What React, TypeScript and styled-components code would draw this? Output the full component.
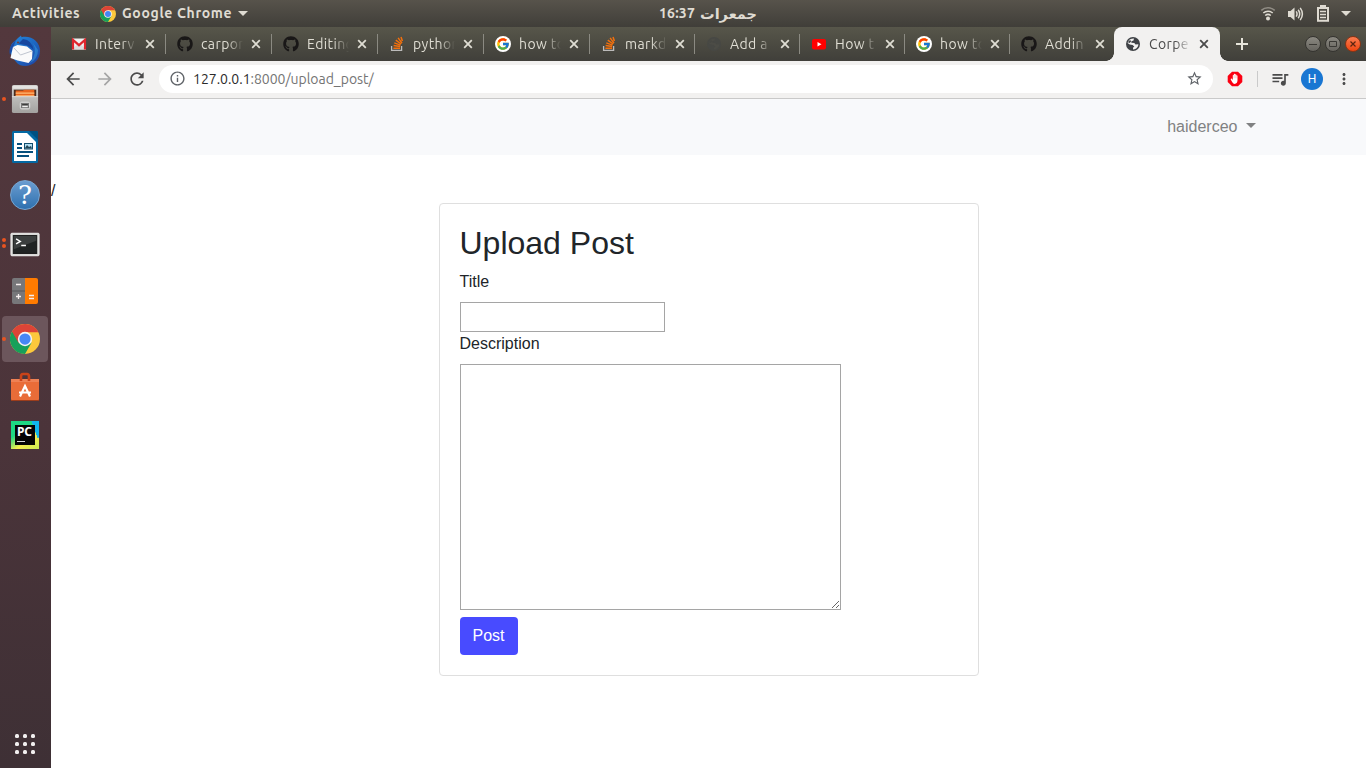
import React from "react";
import styled, { createGlobalStyle, css } from "styled-components";
import { FaGithub } from "react-icons/fa";
import { FcGoogle } from "react-icons/fc";
import {
  MdArrowBack,
  MdArrowForward,
  MdRefresh,
  MdInfoOutline,
  MdStarBorder,
  MdQueueMusic,
  MdMoreVert,
} from "react-icons/md";

const uiFont = `Ubuntu, "Noto Sans", "DejaVu Sans", sans-serif`;

const GlobalStyle = createGlobalStyle`
  *, *::before, *::after { box-sizing: border-box; }
  body { margin: 0; overflow: hidden; background: #fff; }
  svg { display: block; flex: none; }
`;

const Desktop = styled.div`
  display: flex;
  flex-direction: column;
  width: 1366px;
  height: 768px;
  font-family: ${uiFont};
`;

const TopBar = styled.header`
  display: grid;
  grid-template-columns: 659px auto 1fr;
  align-items: center;
  height: 27px;
  background: linear-gradient(#57534b, #403e39);
  color: #dfdbd2;
  font-size: 14px;
  font-weight: 700;
  line-height: 27px;
`;

const TopGroup = styled.div`
  display: flex;
  align-items: center;
`;

const Activities = styled.span`
  width: 88px;
  padding-left: 12px;
  letter-spacing: 0.6px;
`;

const AppMenu = styled.div`
  display: flex;
  align-items: center;
  gap: 6px;
  padding-left: 12px;
  letter-spacing: 0.65px;
`;

const Clock = styled.div`
  display: flex;
  align-items: center;
  justify-content: space-between;
  width: 98px;
  height: 27px;
  direction: rtl;
  font-family: Ubuntu, "DejaVu Sans", sans-serif;
  font-size: 14.5px;
  white-space: nowrap;
`;

const TimeText = styled.span`
  font-family: ${uiFont};
  font-size: 14px;
  letter-spacing: 0.2px;
`;

const Indicators = styled.div`
  display: flex;
  justify-content: flex-end;
  align-items: center;
  gap: 11.5px;
  padding-right: 15px;
`;

const Caret = styled.span`
  width: 0;
  height: 0;
  border: 5px solid transparent;
  border-top-color: currentColor;
  border-bottom: 0;
`;

const Workspace = styled.div`
  display: flex;
  flex: 1;
  min-height: 0;
`;

const Launcher = styled.nav`
  display: flex;
  flex-direction: column;
  gap: 2px;
  width: 51px;
  padding: 1px 2px 0;
  background: linear-gradient(#53383d, #4b343a 55%, #3e3035);
`;

const LauncherItem = styled.div<{ $active?: boolean; $drop?: boolean }>`
  position: relative;
  display: flex;
  align-items: center;
  justify-content: center;
  width: 46px;
  height: 46px;
  padding-top: ${(p) => (p.$drop ? 2 : 0)}px;
  border-radius: 4px;
  background: ${(p) => (p.$active ? "#6c565c" : "transparent")};
`;

const RunningDots = styled.div`
  position: absolute;
  left: 0;
  top: 0;
  bottom: 0;
  display: flex;
  flex-direction: column;
  justify-content: center;
  gap: 2px;
`;

const RunningDot = styled.span`
  width: 4px;
  height: 4px;
  border-radius: 50%;
  background: #e95420;
`;

const AppsButton = styled.div`
  display: grid;
  grid-template-columns: repeat(3, 4px);
  gap: 4px;
  justify-content: center;
  margin-top: auto;
  padding: 0 1px 14px 0;
`;

const AppsDot = styled.span`
  width: 4px;
  height: 4px;
  border-radius: 1.5px;
  background: #f2f0f0;
`;

const Browser = styled.main`
  display: flex;
  flex-direction: column;
  flex: 1;
  min-width: 0;
  background: #fff;
`;

const TabStrip = styled.div`
  display: flex;
  height: 34px;
  padding-left: 9px;
  background: linear-gradient(#57564a, #403f3a);
`;

const flare = css`
  content: "";
  position: absolute;
  bottom: 0;
  width: 8px;
  height: 8px;
`;

const TabBox = styled.div<{ $width: number; $active?: boolean; $line?: boolean }>`
  position: relative;
  display: flex;
  align-items: center;
  flex: none;
  width: ${(p) => p.$width}px;
  height: 34px;
  padding-left: 11px;
  color: ${(p) => (p.$active ? "#4a4a4a" : "#dfddd3")};
  ${(p) =>
    p.$active &&
    css`
      background: #f2f1f0;
      border-radius: 8px 8px 0 0;
      &::before {
        ${flare}
        left: -8px;
        background: radial-gradient(circle at 0 0, transparent 7.5px, #f2f1f0 8px);
      }
      &::after {
        ${flare}
        right: -8px;
        background: radial-gradient(circle at 100% 0, transparent 7.5px, #f2f1f0 8px);
      }
    `}
  ${(p) =>
    p.$line &&
    css`
      &::after {
        content: "";
        position: absolute;
        right: 0;
        top: 7px;
        width: 1px;
        height: 20px;
        background: #8b8a82;
      }
    `}
`;

const Favicon = styled.span`
  display: flex;
  align-items: center;
  justify-content: center;
  width: 16px;
  height: 16px;
`;

const GoogleDisc = styled.span`
  display: flex;
  align-items: center;
  justify-content: center;
  width: 16px;
  height: 16px;
  border-radius: 50%;
  background: #fff;
`;

const TabTitle = styled.span`
  width: 42px;
  margin: 0 8px;
  font-size: 14px;
  line-height: 20px;
  letter-spacing: 0.4px;
  white-space: nowrap;
  mask-image: linear-gradient(to right, #000 62%, transparent);
`;

const NewTab = styled.div`
  display: flex;
  align-items: center;
  padding-left: 16px;
`;

const WindowControls = styled.div`
  display: flex;
  align-items: center;
  gap: 4px;
  margin-left: auto;
  padding-right: 5px;
`;

const WindowButton = styled.span<{ $close?: boolean }>`
  display: flex;
  align-items: center;
  justify-content: center;
  width: 16px;
  height: 16px;
  border: 1px solid ${(p) => (p.$close ? "#8a3414" : "#353430")};
  border-radius: 50%;
  background: ${(p) =>
    p.$close ? "linear-gradient(#fb7c50, #ed4510)" : "linear-gradient(#8b8981, #66645e)"};
`;

const Toolbar = styled.div`
  display: flex;
  align-items: center;
  height: 38px;
  padding: 0 10px 2px 12px;
  border-bottom: 1px solid #c9c9c9;
  background: #f2f1f0;
  color: #4b4b4b;
`;

const NavButtons = styled.div`
  display: flex;
  flex: none;
  gap: 12px;
  width: 96px;
`;

const AddressBar = styled.div`
  display: flex;
  flex: none;
  align-items: center;
  width: 1054px;
  height: 28px;
  padding: 0 10px 0 9.5px;
  border-radius: 14px;
  background: #fff;
  color: #5f6368;
`;

const Address = styled.span`
  flex: 1;
  margin-left: 7.5px;
  color: #747474;
  font-size: 14px;
  letter-spacing: -0.02px;
`;

const Host = styled.span`
  color: #2b2b2b;
`;

const ToolbarActions = styled.div`
  display: flex;
  align-items: center;
  margin-left: 14px;
`;

const ToolbarDivider = styled.span`
  width: 1px;
  height: 16px;
  margin: 0 12px 0 14px;
  background: #cacaca;
`;

const Avatar = styled.span`
  display: flex;
  align-items: center;
  justify-content: center;
  width: 22px;
  height: 22px;
  margin: 0 12px 0 11px;
  border-radius: 50%;
  background: #1976d2;
  color: #fff;
  font: 12px/22px Roboto, sans-serif;
`;

const Page = styled.div`
  flex: 1;
  background: #fff;
  color: #212529;
  font: 16px/24px "Liberation Sans", Arial, sans-serif;
`;

const Navbar = styled.div`
  display: flex;
  align-items: center;
  justify-content: flex-end;
  gap: 8.5px;
  height: 56px;
  padding-right: 110px;
  background: #f8f9fb;
  color: #808182;
`;

const MenuCaret = styled(Caret)`
  margin-bottom: 4px;
`;

const PathLine = styled.div`
  height: 48px;
  padding-top: 24px;
`;

const Card = styled.form`
  width: 540px;
  height: 473px;
  margin-left: 387.5px;
  padding: 20px;
  border: 1px solid #dfdfdf;
  border-radius: 4px;
`;

const Heading = styled.h2`
  margin: 0 0 8px;
  font-size: 32px;
  font-weight: 400;
  line-height: 38.4px;
`;

const Label = styled.label`
  display: block;
  margin-bottom: 8px;
`;

const TitleInput = styled.input`
  display: block;
  width: 205px;
  height: 30px;
  border: 1px solid #a5a5a5;
  border-radius: 0;
  background: #fff;
`;

const DescriptionInput = styled.textarea`
  display: block;
  width: 381px;
  height: 246px;
  border: 1px solid #a5a5a5;
  border-radius: 0;
  background: #fff;
`;

const PostButton = styled.button`
  display: block;
  width: 58px;
  height: 38px;
  margin-top: 7px;
  padding: 0;
  border: 0;
  border-radius: 4px;
  background: #484bff;
  color: #fff;
  font: 16px/24px "Liberation Sans", Arial, sans-serif;
`;

const ChromeLogo = ({ size }: { size: number }) => (
  <svg width={size} height={size} viewBox="0 0 48 48">
    <circle cx="24" cy="24" r="24" fill="#fcc93c" />
    <path d="M24 24 3.2 12A24 24 0 0 0 24 48L34.4 30Z" fill="#17a05a" />
    <path d="M24 24V13H45.3A24 24 0 0 0 3.2 12L13.6 30Z" fill="#dc4437" />
    <circle cx="24" cy="24" r="11.5" fill="#f4f4f4" />
    <circle cx="24" cy="24" r="9" fill="#4587f4" />
  </svg>
);

const GmailIcon = () => (
  <svg width="16" height="16" viewBox="0 0 16 16">
    <path d="M1 2.5h14v11H1z" fill="#f1f1f1" />
    <path d="m1 13.500 5-5 2 1.500L10 8.500l5 5z" fill="#ddd" />
    <path d="M2 13.500V4l6 5.200L14 4v9.500" fill="none" stroke="#e0262d" strokeWidth="2.2" />
  </svg>
);

const GlobeIcon = ({ color, land }: { color: string; land: string }) => (
  <svg width="16" height="16" viewBox="0 0 16 16">
    <circle cx="8" cy="8" r="7" fill={color} />
    <path
      d="M9 2.600 8.500 4.500 6.500 5.200 6.300 6.800 9.300 7l1.200 1.600 2.900-.3Q13.200 12 9.600 13.200L8 13.400v-1.600l1.300-1.400L7.600 8.900 4.700 8.600 2.600 6.900Q3.600 2.600 9 2.600z"
      fill={land}
    />
    <path d="m3.600 4.800 1.800-.6.8 1-1.500 1.700-1.500-.3z" fill={color} />
  </svg>
);

const StackIcon = () => (
  <svg width="16" height="16" viewBox="0 0 16 16" fill="none" strokeWidth="1.3">
    <path d="M2.6 10v4.4h10V10" stroke="#bcbbbb" />
    <path
      d="M4.4 12.2h6.7M4.6 9.6l6.6 1M5.3 6.9l6.2 2.2M6.8 4.1l5.3 3.9M9.1 1.900l3.900 5.200M12 1l1.400 4"
      stroke="#f4700c"
      strokeWidth="1.5"
    />
  </svg>
);

const YoutubeIcon = () => (
  <svg width="16" height="16" viewBox="0 0 16 16">
    <rect x="1" y="3" width="14" height="10.5" rx="2" fill="#f00" />
    <path d="m6.500 6 4 2.200-4 2.300z" fill="#fff" />
  </svg>
);

const CloseIcon = () => (
  <svg width="10" height="10" viewBox="0 0 10 10" stroke="currentColor" strokeWidth="1.8">
    <path d="m1.200 1.200 7.600 7.600M8.800 1.200 1.200 8.800" />
  </svg>
);

const WifiIcon = () => (
  <svg width="16" height="16" viewBox="0 0 16 16" fill="none" stroke="#dfdbd2" strokeWidth="1.6">
    <path d="M1.300 4.400a10 10 0 0 1 13.400 0" opacity=".45" />
    <path d="M3.300 7a7 7 0 0 1 9.400 0M5.200 9.500a4.400 4.400 0 0 1 5.600 0" />
    <circle cx="8" cy="12.500" r="2" fill="#dfdbd2" stroke="none" />
  </svg>
);

const VolumeIcon = () => (
  <svg width="17" height="16" viewBox="0 0 17 16" fill="none" stroke="#dfdbd2" strokeWidth="1.5">
    <path d="M1 5h2.500L7.500 1.500v13L3.500 11H1z" fill="#dfdbd2" stroke="none" />
    <path d="M9.200 5.400q1.700 2.600 0 5.200M11.200 3.700q3 4.300 0 8.600M13.200 1.900q4.400 6.100 0 12.200" />
  </svg>
);

const BatteryIcon = () => (
  <svg width="14" height="17" viewBox="0 0 14 17" fill="none" stroke="#dfdbd2">
    <path d="M2 3h10v12.800H2z" strokeWidth="2" />
    <path d="M4 1.200h6" strokeWidth="2.4" />
    <path d="M4 6.500h6M4 9.500h6M4 12.500h6" strokeWidth="1.3" />
  </svg>
);

const AdBlockIcon = () => (
  <svg width="16" height="16" viewBox="0 0 16 16">
    <path d="M5 .7h6L15.300 5v6L11 15.300H5L.7 11V5z" fill="#fb0012" />
    <path
      d="M4.700 7.600 5.800 9V4.200q.7-.8 1.100 0V3.100q.7-.7 1.200 0v.3q.8-.6 1.200.2v.8q.9-.5 1.200.3v4.900q-.3 3.300-2.800 3.300-1.500 0-2.400-1.600L3.700 8.400q0-.8 1-.8z"
      fill="#fff"
    />
    <path d="M6.900 4v3.200M8.100 3.600v3.600M9.300 4.500v2.800" stroke="#f89a9f" strokeWidth=".4" />
  </svg>
);

const ThunderbirdIcon = () => (
  <svg width="34" height="34" viewBox="0 0 34 34">
    <defs>
      <linearGradient id="bird" x1="0" y1="0" x2="1" y2="1">
        <stop offset="0" stopColor="#2689dc" />
        <stop offset=".5" stopColor="#1d69c4" />
        <stop offset="1" stopColor="#203f9e" />
      </linearGradient>
    </defs>
    <path
      d="M10 4 13 1.500l.5 1.700C23 1 32 7.500 32 17c0 8-6 14.500-14 15-4 .2-7-1-9-3L4 23C1 16 2 10 7 7z"
      fill="url(#bird)"
    />
    <path d="M2 21c-2-7 2-12 6-15L5 14z" fill="#1b4da7" />
    <path d="m5 13 4.500-2L19 12.500l5.500 4.500-.5 8-3.500 4-11-2.500L2.500 24z" fill="#fafafa" />
    <path d="m5.500 13.500 7 7.500L24 17" fill="none" stroke="#bfc5cf" />
    <path d="M15 5q9 1 10.500 11-4-5-11-5.500l-4-1z" fill="#16479f" />
    <path d="M25 9q5 9-3 20 8-4 8-13z" fill="#37a8e9" opacity=".45" />
    <circle cx="10" cy="8.500" r="1" fill="#743b36" />
  </svg>
);

const FilesIcon = () => (
  <svg width="28" height="30" viewBox="0 0 30 32">
    <defs>
      <linearGradient id="drawer" x1="0" y1="0" x2="0" y2="1">
        <stop offset="0" stopColor="#d2d1cf" />
        <stop offset="1" stopColor="#a3a2a0" />
      </linearGradient>
    </defs>
    <rect x="1" y="1" width="28" height="30" rx="2" fill="url(#drawer)" />
    <path d="M2 2h26v3H2z" fill="#e4e3e1" />
    <path d="M3 6h24v7H3z" fill="#4a2d20" />
    <path d="M5 7h8l1-1h11v7H5z" fill="#e8651e" />
    <path d="M5 9.700h20M5 12.500h20" stroke="#ffbd77" strokeWidth="1.1" />
    <path d="M1 13.500h28" stroke="#e0dfdd" />
    <rect x="10" y="19.500" width="10" height="7" rx="1.500" fill="#777" stroke="#eee" />
    <path d="M12 24h6" stroke="#eee" strokeWidth="1.500" />
    <path d="M12 22h6" stroke="#333" />
  </svg>
);

const WriterIcon = () => (
  <svg width="26" height="32" viewBox="0 0 26 32">
    <rect width="26" height="32" rx="1.5" fill="#0369a3" />
    <path d="M2 2h13l9 9v19H2z" fill="#fff" />
    <path d="m17 0 9 9V1.500Q26 0 24.500 0z" fill="#005080" />
    <path d="M5 13h5M5 17h5M5 21h16M5 25h12" stroke="#07507d" strokeWidth="2" />
    <rect x="12.500" y="12.500" width="8" height="5.500" fill="#b2def2" stroke="#124e6d" />
    <path d="m13 17 2-3 2 2 2-1 1 2.500h-7z" fill="#224454" />
  </svg>
);

const HelpGlyph = styled.span`
  display: flex;
  align-items: center;
  justify-content: center;
  width: 30px;
  height: 30px;
  border: 1px solid #76a5d1;
  border-radius: 50%;
  background: linear-gradient(#6b9dd0, #2e70af);
  color: #fff;
  font: 26px/28px "DejaVu Serif", serif;
`;

const TerminalIcon = () => (
  <svg width="30" height="25" viewBox="0 0 32 26">
    <rect x="1" y="1" width="30" height="24" rx="1" fill="#d8d8d6" stroke="#f2f2f1" />
    <rect x="3.500" y="3.500" width="25" height="19" fill="#202323" stroke="#111" />
    <path d="M4 4h24v5L4 18z" fill="#3b3e3e" />
    <path d="m6.500 7 4.500 2.700-4.500 2.700M12 14h5" fill="none" stroke="#fff" strokeWidth="1.5" />
  </svg>
);

const CalculatorIcon = () => (
  <svg width="26" height="26" viewBox="0 0 26 26">
    <path d="M2 0h11v26H2q-2 0-2-2V2q0-2 2-2z" fill="#77777a" />
    <path d="M13 0h11q2 0 2 2v22q0 2-2 2H13z" fill="#ff7b00" />
    <path d="M0 13h13" stroke="#58585b" />
    <path d="M4 6.500h5M4 18.500h5M6.500 16v5M17 17.500h5M17 20.500h5" stroke="#f6eeee" strokeWidth="1.3" />
  </svg>
);

const SoftwareIcon = () => (
  <svg width="28" height="30" viewBox="0 0 28 30">
    <path d="M0 7h28v20q0 2-2 2H2q-2 0-2-2z" fill="#e96c38" />
    <path d="M0 7h28v3H0z" fill="#ee8154" />
    <path d="M0 28.500h28" stroke="#9c3d1c" />
    <path d="M10 9V4.500Q10 2 12 2h4q2 0 2 2.500V9" fill="none" stroke="#c94319" strokeWidth="2.6" />
    <path d="m9 24.500 5-10.500 5 10.500M8 20.500h12" fill="none" stroke="#fff" strokeWidth="2.2" />
  </svg>
);

const PycharmTile = styled.span`
  display: flex;
  align-items: center;
  justify-content: center;
  width: 28px;
  height: 28px;
  background: linear-gradient(250deg, #10b5ed 22%, transparent 23%) 0 0 / 100% 60% no-repeat,
    linear-gradient(145deg, #1dd883 35%, #f6ee4c 66%, #c9e955);
`;

const PycharmLabel = styled.span`
  width: 20px;
  height: 20px;
  padding: 0 0 0 2px;
  background: #050505;
  color: #fff;
  font: 700 12px/14px "Noto Sans", sans-serif;
  letter-spacing: -0.2px;
  &::after {
    content: "";
    display: block;
    width: 8px;
    height: 1px;
    margin-top: 2px;
    background: #d8d8d8;
  }
`;

const apps: {
  name: string;
  icon: React.ReactNode;
  windows?: number;
  active?: boolean;
  drop?: boolean;
}[] = [
  { name: "Thunderbird", icon: <ThunderbirdIcon /> },
  { name: "Files", icon: <FilesIcon />, windows: 1 },
  { name: "Writer", icon: <WriterIcon /> },
  { name: "Help", icon: <HelpGlyph>?</HelpGlyph> },
  { name: "Terminal", icon: <TerminalIcon />, windows: 2, drop: true },
  { name: "Calculator", icon: <CalculatorIcon /> },
  { name: "Chrome", icon: <ChromeLogo size={30} />, windows: 1, active: true },
  { name: "Software", icon: <SoftwareIcon /> },
  {
    name: "PyCharm",
    icon: (
      <PycharmTile>
        <PycharmLabel>PC</PycharmLabel>
      </PycharmTile>
    ),
  },
];

const github = <FaGithub size={16} color="#191717" />;
const google = (
  <GoogleDisc>
    <FcGoogle size={14} />
  </GoogleDisc>
);

const tabs: { title: string; icon: React.ReactNode; width: number; active?: boolean }[] = [
  { title: "Interv", icon: <GmailIcon />, width: 106 },
  { title: "carpor", icon: github, width: 106 },
  { title: "Editing", icon: github, width: 106 },
  { title: "python", icon: <StackIcon />, width: 106 },
  { title: "how to", icon: google, width: 106 },
  { title: "markd", icon: <StackIcon />, width: 105 },
  { title: "Add a", icon: <GlobeIcon color="#474844" land="#4c4c46" />, width: 105 },
  { title: "How t", icon: <YoutubeIcon />, width: 105 },
  { title: "how to", icon: google, width: 105 },
  { title: "Addin", icon: github, width: 104 },
  { title: "Corpe", icon: <GlobeIcon color="#3f4246" land="#f2f1f0" />, width: 106, active: true },
];

export default function App() {
  return (
    <Desktop>
      <GlobalStyle />
      <TopBar>
        <TopGroup>
          <Activities>Activities</Activities>
          <AppMenu>
            <ChromeLogo size={16} />
            Google Chrome
            <Caret />
          </AppMenu>
        </TopGroup>
        <Clock>
          <span>جمعرات</span>
          <TimeText>16:37</TimeText>
        </Clock>
        <Indicators>
          <WifiIcon />
          <VolumeIcon />
          <BatteryIcon />
          <Caret />
        </Indicators>
      </TopBar>
      <Workspace>
        <Launcher>
          {apps.map((app) => (
            <LauncherItem key={app.name} $active={app.active} $drop={app.drop}>
              <RunningDots>
                {Array.from({ length: app.windows ?? 0 }, (_, i) => (
                  <RunningDot key={i} />
                ))}
              </RunningDots>
              {app.icon}
            </LauncherItem>
          ))}
          <AppsButton>
            {Array.from({ length: 9 }, (_, i) => (
              <AppsDot key={i} />
            ))}
          </AppsButton>
        </Launcher>
        <Browser>
          <TabStrip>
            {tabs.map((tab, i) => (
              <TabBox key={i} $width={tab.width} $active={tab.active} $line={i < tabs.length - 2}>
                <Favicon>{tab.icon}</Favicon>
                <TabTitle>{tab.title}</TabTitle>
                <CloseIcon />
              </TabBox>
            ))}
            <NewTab>
              <svg width="12" height="12" viewBox="0 0 12 12" stroke="#e6e4da" strokeWidth="2">
                <path d="M6 0v12M0 6h12" />
              </svg>
            </NewTab>
            <WindowControls>
              <WindowButton>
                <svg width="8" height="8" viewBox="0 0 8 8" stroke="#3a3935">
                  <path d="M0 4.500h8" />
                </svg>
              </WindowButton>
              <WindowButton>
                <svg width="8" height="8" viewBox="0 0 8 8" stroke="#3a3935" fill="none">
                  <path d="M.5 1.500h7v5h-7z" />
                </svg>
              </WindowButton>
              <WindowButton $close>
                <svg width="8" height="8" viewBox="0 0 8 8" stroke="#5a2410" strokeWidth="1.2">
                  <path d="m1.500 1.500 5 5m0-5-5 5" />
                </svg>
              </WindowButton>
            </WindowControls>
          </TabStrip>
          <Toolbar>
            <NavButtons>
              <MdArrowBack size={20} />
              <MdArrowForward size={20} color="#a5a5a5" />
              <MdRefresh size={20} />
            </NavButtons>
            <AddressBar>
              <MdInfoOutline size={17} />
              <Address>
                <Host>127.0.0.1</Host>:8000/upload_post/
              </Address>
              <MdStarBorder size={17} />
            </AddressBar>
            <ToolbarActions>
              <AdBlockIcon />
              <ToolbarDivider />
              <MdQueueMusic size={20} />
              <Avatar>H</Avatar>
              <MdMoreVert size={18} />
            </ToolbarActions>
          </Toolbar>
          <Page>
            <Navbar>
              haiderceo
              <MenuCaret />
            </Navbar>
            <PathLine>/</PathLine>
            <Card>
              <Heading>Upload Post</Heading>
              <Label htmlFor="title">Title</Label>
              <TitleInput id="title" />
              <Label htmlFor="description">Description</Label>
              <DescriptionInput id="description" />
              <PostButton type="button">Post</PostButton>
            </Card>
          </Page>
        </Browser>
      </Workspace>
    </Desktop>
  );
}
